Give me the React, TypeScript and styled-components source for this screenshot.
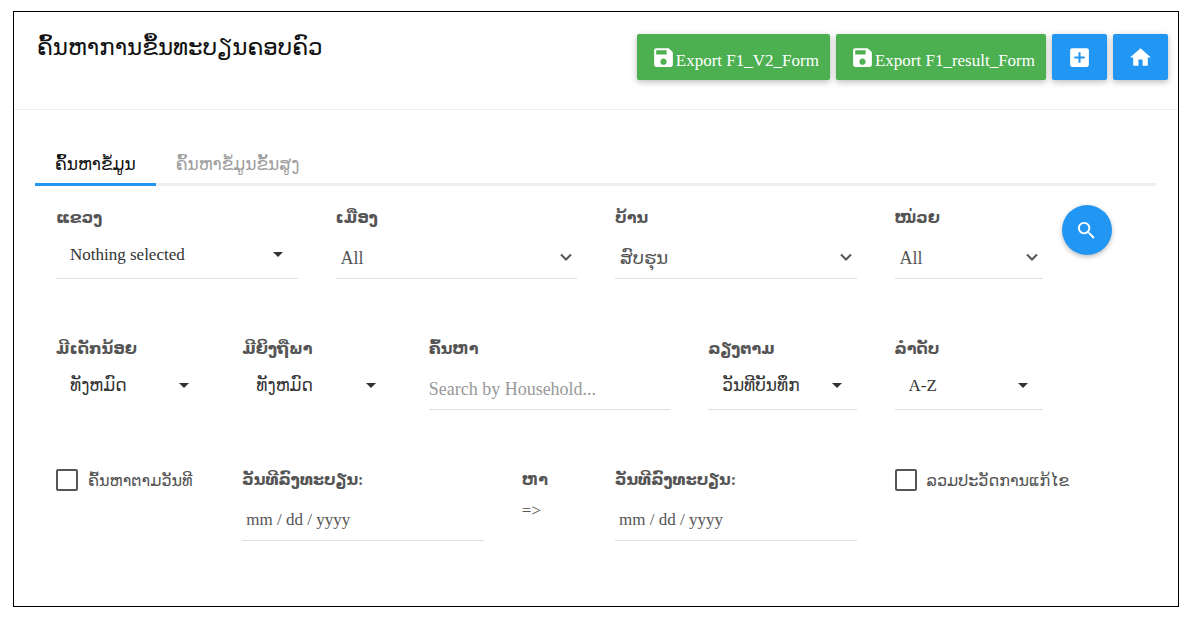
import React, { useState } from "react";
import styled, { createGlobalStyle, css } from "styled-components";
import { MdAddBox, MdArrowDropDown, MdHome, MdSave, MdSearch } from "react-icons/md";

const GlobalStyle = createGlobalStyle`
  *, *::before, *::after { box-sizing: border-box; }
  body {
    margin: 0;
    background: #fff;
    color: #555;
    font-family: "Liberation Serif", "DejaVu Sans", serif;
    font-size: 18px;
  }
  button, input, select { font-family: inherit; color: inherit; }
`;

const Page = styled.div`
  min-height: 100vh;
  padding: 11px 12px 10px 13px;
  display: flex;
`;

const Card = styled.main`
  flex: 1;
  min-width: 0;
  border: 1px solid #000;
`;

const Header = styled.header`
  display: flex;
  justify-content: space-between;
  align-items: flex-start;
  padding: 22px 10px 29px 23px;
  border-bottom: 1px solid #eee;
`;

const Title = styled.h1`
  margin: 0;
  font-size: 23px;
  line-height: 28px;
  font-weight: 400;
  color: #111;
`;

const Actions = styled.div`
  display: flex;
  gap: 6px;
`;

const ActionButton = styled.button<{ $tone: "green" | "blue" }>`
  display: flex;
  align-items: center;
  height: 46px;
  padding: ${(p) => (p.$tone === "green" ? "0 11px 0 14px" : "0 15px")};
  border: 0;
  border-radius: 2px;
  color: #fff;
  font-size: 17px;
  line-height: 20px;
  background: ${(p) => (p.$tone === "green" ? "#4caf50" : "#2196f3")};
  box-shadow: 0 2px 5px rgba(0, 0, 0, 0.16), 0 2px 10px rgba(0, 0, 0, 0.12);
  cursor: pointer;
`;

const ActionText = styled.span`
  padding-top: 8px;
`;

const TabPanel = styled.div`
  padding: 30px 22px 60px 21px;
`;

const Tabs = styled.div`
  display: flex;
  box-shadow: inset 0 -3px 0 #eee;
`;

const Tab = styled.button<{ $active: boolean }>`
  height: 46px;
  padding: 6px 20px 0;
  border: 0;
  border-bottom: 3px solid ${(p) => (p.$active ? "#2196f3" : "transparent")};
  background: none;
  font-size: 17px;
  line-height: 20px;
  color: ${(p) => (p.$active ? "#111" : "#9e9e9e")};
  cursor: pointer;
`;

const Form = styled.form`
  padding: 19px 20px 0 21px;
`;

const Row = styled.div`
  display: grid;
  grid-template-columns: repeat(12, minmax(0, 1fr));
  column-gap: 38px;
  height: 131px;
  align-items: start;

  &:last-child { height: auto; }
`;

const Field = styled.div<{ $span: number }>`
  grid-column: span ${(p) => p.$span};
  min-width: 0;
`;

const Label = styled.label`
  display: block;
  height: 27px;
  font-size: 16px;
  line-height: 26px;
  font-weight: 700;
  white-space: nowrap;
`;

const Control = styled.div`
  position: relative;
`;

const controlBox = css`
  display: block;
  width: 100%;
  height: 47px;
  border: 0;
  border-bottom: 1px solid #e0e0e0;
  border-radius: 0;
  background: transparent;
  outline: none;
`;

const Select = styled.select<{ $picker: boolean; $bare?: boolean }>`
  ${controlBox}
  appearance: none;
  padding: ${(p) => (p.$picker ? "0 34px 0 14px" : "6px 30px 0 5px")};
  font-size: ${(p) => (p.$picker ? 17 : 18)}px;
  line-height: 26px;
  color: ${(p) => (p.$picker ? "#333" : "#555")};
  border-bottom-color: ${(p) => (p.$bare ? "transparent" : "#e0e0e0")};
`;

const TextInput = styled.input<{ $inset: number }>`
  ${controlBox}
  padding: 6px 0 0 ${(p) => p.$inset}px;
  font-size: ${(p) => (p.$inset ? 17 : 18)}px;
  &::placeholder { color: ${(p) => (p.$inset ? "#555" : "#999")}; opacity: 1; }
`;

const Caret = styled(MdArrowDropDown)`
  position: absolute;
  right: 8px;
  top: 10px;
  color: #333;
  pointer-events: none;
`;

const Chevron = styled.svg`
  position: absolute;
  right: 5px;
  top: 21px;
  fill: none;
  stroke: #555;
  stroke-width: 2;
  pointer-events: none;
`;

const Arrow = styled.p`
  margin: 0;
  font-size: 17px;
  line-height: 34px;
`;

const SearchButton = styled.button`
  display: grid;
  place-items: center;
  width: 50px;
  height: 50px;
  margin-left: -19px;
  padding: 0;
  border: 0;
  border-radius: 50%;
  color: #fff;
  background: #2196f3;
  box-shadow: 0 2px 5px rgba(0, 0, 0, 0.26);
  cursor: pointer;
`;

const CheckLabel = styled.label`
  display: flex;
  align-items: center;
  gap: 10px;
  height: 26px;
  font-size: 16px;
  white-space: nowrap;
`;

const Checkbox = styled.input`
  appearance: none;
  flex: none;
  width: 22px;
  height: 22px;
  margin: 0;
  border: 2px solid #555;
  border-radius: 2px;
  &:checked { background: #2196f3; }
`;

type SelectFieldProps = {
  id: string;
  label: string;
  value: string;
  span: number;
  picker?: boolean;
  bare?: boolean;
};

function SelectField({ id, label, value, span, picker = false, bare }: SelectFieldProps) {
  return (
    <Field $span={span}>
      <Label htmlFor={id}>{label}</Label>
      <Control>
        <Select id={id} $picker={picker} $bare={bare}>
          <option>{value}</option>
        </Select>
        {picker ? (
          <Caret size={24} />
        ) : (
          <Chevron width="12" height="9" viewBox="0 0 12 9">
            <path d="M1 1.5 6 6.5 11 1.5" />
          </Chevron>
        )}
      </Control>
    </Field>
  );
}

type InputFieldProps = { id: string; label: string; hint: string; inset?: number };

function InputField({ id, label, hint, inset = 0 }: InputFieldProps) {
  return (
    <Field $span={3}>
      <Label htmlFor={id}>{label}</Label>
      <TextInput id={id} type="text" placeholder={hint} $inset={inset} />
    </Field>
  );
}

const tabs = ["ຄົ້ນຫາຂໍ້ມູນ", "ຄົ້ນຫາຂໍ້ມູນຂັ້ນສູງ"];

export default function App() {
  const [active, setActive] = useState(0);
  return (
    <Page>
      <GlobalStyle />
      <Card>
        <Header>
          <Title>ຄົ້ນຫາການຂຶ້ນທະບຽນຄອບຄົວ</Title>
          <Actions>
            <ActionButton type="button" $tone="green">
              <MdSave size={25} />
              <ActionText>Export F1_V2_Form</ActionText>
            </ActionButton>
            <ActionButton type="button" $tone="green">
              <MdSave size={25} />
              <ActionText>Export F1_result_Form</ActionText>
            </ActionButton>
            <ActionButton type="button" $tone="blue" aria-label="Add">
              <MdAddBox size={25} />
            </ActionButton>
            <ActionButton type="button" $tone="blue" aria-label="Home">
              <MdHome size={25} />
            </ActionButton>
          </Actions>
        </Header>
        <TabPanel>
          <Tabs role="tablist">
            {tabs.map((tab, i) => (
              <Tab
                key={tab}
                type="button"
                role="tab"
                aria-selected={active === i}
                $active={active === i}
                onClick={() => setActive(i)}
              >
                {tab}
              </Tab>
            ))}
          </Tabs>
          <Form onSubmit={(e) => e.preventDefault()}>
            <Row>
              <SelectField id="province" label="ແຂວງ" value="Nothing selected" span={3} picker />
              <SelectField id="district" label="ເມືອງ" value="All" span={3} />
              <SelectField id="village" label="ບ້ານ" value="ສົບຮຸນ" span={3} />
              <SelectField id="unit" label="ໜ່ວຍ" value="All" span={2} />
              <Field $span={1}>
                <SearchButton type="submit" aria-label="Search">
                  <MdSearch size={23} />
                </SearchButton>
              </Field>
            </Row>
            <Row>
              <SelectField id="children" label="ມີເດັກນ້ອຍ" value="ທັງຫມົດ" span={2} picker bare />
              <SelectField id="pregnant" label="ມີຍິງຖືພາ" value="ທັງຫມົດ" span={2} picker bare />
              <InputField id="search" label="ຄົ້ນຫາ" hint="Search by Household..." />
              <SelectField id="sort" label="ລຽງຕາມ" value="ວັນທີບັນທຶກ" span={2} picker />
              <SelectField id="order" label="ລຳດັບ" value="A-Z" span={2} picker />
            </Row>
            <Row>
              <Field $span={2}>
                <CheckLabel>
                  <Checkbox type="checkbox" />
                  ຄົ້ນຫາຕາມວັນທີ
                </CheckLabel>
              </Field>
              <InputField id="from" label="ວັນທີລົງທະບຽນ:" hint="mm / dd / yyyy" inset={4} />
              <Field $span={1}>
                <Label as="div">ຫາ</Label>
                <Arrow>=&gt;</Arrow>
              </Field>
              <InputField id="to" label="ວັນທີລົງທະບຽນ:" hint="mm / dd / yyyy" inset={4} />
              <Field $span={2}>
                <CheckLabel>
                  <Checkbox type="checkbox" />
                  ລວມປະວັດການແກ້ໄຂ
                </CheckLabel>
              </Field>
            </Row>
          </Form>
        </TabPanel>
      </Card>
    </Page>
  );
}
